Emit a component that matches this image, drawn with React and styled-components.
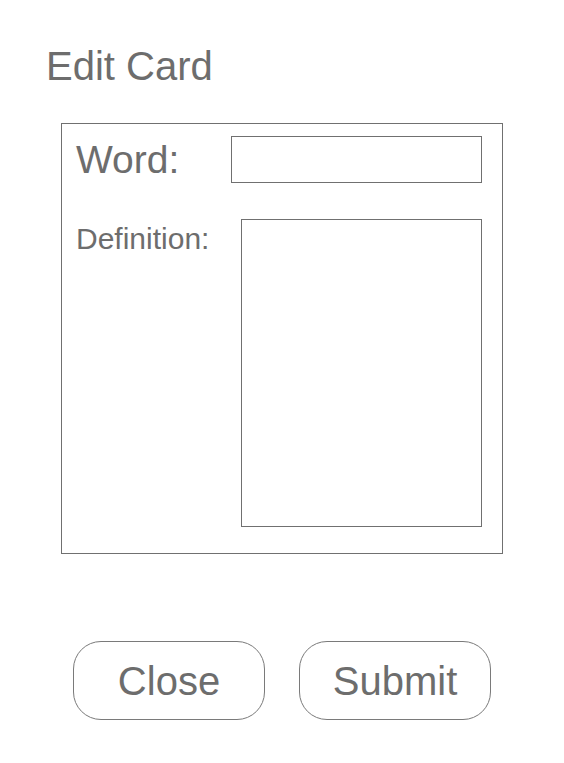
import React from "react";
import styled, { createGlobalStyle } from "styled-components";

const Global = createGlobalStyle`
  html, body { margin: 0; padding: 0; background: #fff; }
  body { font-family: "Liberation Sans", Arial, sans-serif; color: #6d6d6d; }
`;

const Page = styled.div`
  width: 564px;
  height: 763px;
  box-sizing: border-box;
  padding: 43px 0 0 0;
  display: flex;
  flex-direction: column;
`;

const Title = styled.h1`
  margin: 0 0 0 46px;
  font-size: 40px;
  font-weight: 400;
  line-height: 47px;
  color: #6d6d6d;
`;

const Card = styled.div`
  margin: 33px 0 0 61px;
  width: 442px;
  height: 431px;
  box-sizing: border-box;
  border: 1px solid #707070;
  padding: 12px 20px 26px 14px;
  display: flex;
  flex-direction: column;
  gap: 36px;
`;

const Row = styled.div`
  display: flex;
  align-items: ${(p) => (p.$top ? "flex-start" : "center")};
  flex: ${(p) => (p.$grow ? 1 : "none")};
`;

const Label = styled.label`
  font-size: ${(p) => p.$size}px;
  line-height: 1;
  color: #6d6d6d;
  padding-top: ${(p) => p.$pt || 0}px;
`;

const Input = styled.div`
  margin-left: auto;
  width: ${(p) => p.$w}px;
  height: ${(p) => p.$h}px;
  box-sizing: border-box;
  border: 1px solid #707070;
  background: #fff;
`;

const Buttons = styled.div`
  margin: 87px 0 0 73px;
  display: flex;
  gap: 34px;
`;

const Button = styled.button`
  width: 192px;
  height: 79px;
  box-sizing: border-box;
  border: 1px solid #7a7a7a;
  border-radius: 28px;
  background: #fff;
  font-family: "Liberation Sans", Arial, sans-serif;
  font-size: 40px;
  color: #6d6d6d;
  padding: 0;
  padding-top: 2px;
`;

export default function App() {
  return (
    <>
      <Global />
      <Page>
        <Title>Edit Card</Title>
        <Card>
          <Row>
            <Label $size={39}>Word:</Label>
            <Input $w={251} $h={47} />
          </Row>
          <Row $top $grow>
            <Label $size={30} $pt={5}>Definition:</Label>
            <Input $w={241} $h={308} />
          </Row>
        </Card>
        <Buttons>
          <Button>Close</Button>
          <Button>Submit</Button>
        </Buttons>
      </Page>
    </>
  );
}
